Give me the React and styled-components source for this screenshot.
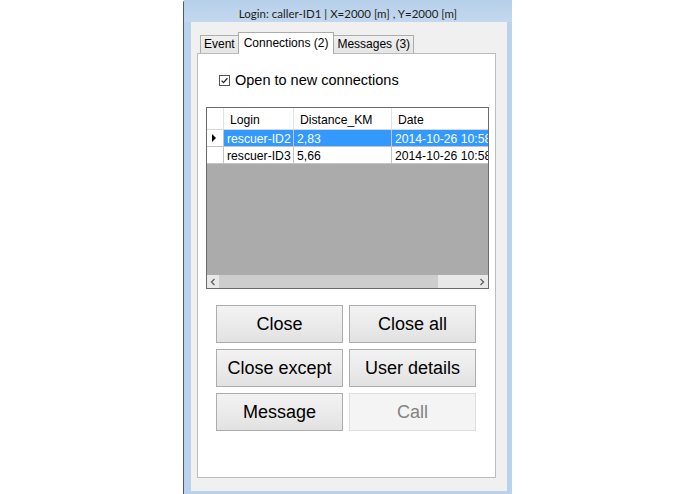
import React from "react";
import styled, { createGlobalStyle, css } from "styled-components";

const Global = createGlobalStyle`
  html, body { margin: 0; padding: 0; background: #ffffff; }
  * { box-sizing: border-box; }
`;

const Page = styled.div`
  width: 695px;
  height: 494px;
  display: flex;
  justify-content: center;
  overflow: hidden;
`;

const Window = styled.div`
  width: 329px;
  height: 494px;
  display: flex;
  flex-direction: column;
  border-left: 1px solid #4f5b68;
  border-top-left-radius: 3px;
  background: #bad2ec;
  padding: 0 5px 3px 7px;
`;

const TitleBar = styled.div`
  height: 22px;
  display: flex;
  align-items: center;
  justify-content: center;
  padding-top: 4px;
  font-family: Lato, "Noto Sans", sans-serif;
  font-size: 11.5px;
  color: #1e1e1e;
  background: linear-gradient(#b6cfe9, #c3d8ee);
  margin: 0 -5px 0 -7px;
`;

const Client = styled.div`
  flex: 1;
  display: flex;
  flex-direction: column;
  background: #f0f0f0;
  padding: 10px 11px 13px 6px;
`;

const TabStrip = styled.div`
  height: 21px;
  display: flex;
  align-items: flex-end;
  padding-left: 3px;
  position: relative;
  z-index: 1;
`;

const Tab = styled.div`
  font-family: "Liberation Sans", Arial, sans-serif;
  font-size: 12px;
  color: #000;
  display: flex;
  align-items: center;
  justify-content: center;
  border: 1px solid #acacac;
  border-bottom: none;
  ${(p) =>
    p.$active
      ? css`
          height: 22px;
          margin: 0 -1px -1px -1px;
          padding: 0 5px 2px;
          background: #ffffff;
          position: relative;
          z-index: 2;
        `
      : css`
          height: 18px;
          padding: 0 3px 1px;
          background: linear-gradient(#f0f0f0, #e5e5e5);
        `}
`;

const TabPanel = styled.div`
  flex: 1;
  background: #ffffff;
  border: 1px solid #bcbcbc;
  display: flex;
  flex-direction: column;
`;

const CheckRow = styled.label`
  display: flex;
  align-items: center;
  gap: 5px;
  height: 18px;
  margin: 17px 0 0 21px;
  font-family: "Liberation Sans", Arial, sans-serif;
  font-size: 14.5px;
  color: #000;
`;

const Grid = styled.div`
  width: 283px;
  height: 182px;
  margin: 18px 0 0 8px;
  border: 1px solid #6b6b6b;
  background: #ababab;
  display: flex;
  flex-direction: column;
  overflow: hidden;
`;

const Table = styled.div`
  display: grid;
  grid-template-columns: 17px 70px 98px 120px;
  grid-template-rows: 22px 17px 17px;
  font-family: "Liberation Sans", Arial, sans-serif;
  font-size: 12.2px;
  color: #000;
`;

const HeadCell = styled.div`
  background: #ffffff;
  border-right: 1px solid #e2e2e2;
  border-bottom: 1px solid #d8d8d8;
  display: flex;
  align-items: center;
  padding: 2px 0 0 6px;
  white-space: nowrap;
`;

const RowHead = styled.div`
  background: #ffffff;
  border-right: 1px solid #c4c4c4;
  border-bottom: 1px solid #c4c4c4;
  display: flex;
  align-items: center;
  padding-left: 5px;
`;

const Arrow = styled.span`
  width: 0;
  height: 0;
  border-top: 4px solid transparent;
  border-bottom: 4px solid transparent;
  border-left: 4px solid #000;
`;

const Cell = styled.div`
  border-right: 1px solid #c4c4c4;
  border-bottom: 1px solid #c4c4c4;
  display: flex;
  align-items: center;
  padding: 1px 0 0 3px;
  white-space: nowrap;
  overflow: hidden;
  background: ${(p) => (p.$selected ? "#3399ff" : "#ffffff")};
  color: ${(p) => (p.$selected ? "#ffffff" : "#000000")};
`;

const Empty = styled.div`
  flex: 1;
  background: #ababab;
`;

const HScroll = styled.div`
  height: 13px;
  background: #e8e8e8;
  display: flex;
  align-items: center;
`;

const ScrollArrow = styled.div`
  width: 12px;
  height: 13px;
  display: flex;
  align-items: center;
  justify-content: center;
`;

const Thumb = styled.div`
  width: 219px;
  height: 13px;
  background: #cdcdcd;
`;

const Track = styled.div`
  flex: 1;
`;

const Buttons = styled.div`
  display: grid;
  grid-template-columns: 127px 127px;
  grid-auto-rows: 38px;
  column-gap: 6px;
  row-gap: 6px;
  margin: 16px 0 0 18px;
`;

const Button = styled.button`
  font-family: "Liberation Sans", Arial, sans-serif;
  font-size: 18px;
  padding: 0;
  border: 1px solid ${(p) => (p.disabled ? "#dedede" : "#adadad")};
  background: ${(p) =>
    p.disabled ? "#f4f4f4" : "linear-gradient(#f2f2f2, #ebebeb 50%, #e2e2e2)"};
  color: ${(p) => (p.disabled ? "#838383" : "#000000")};
`;

const ChevL = () => (
  <svg width="6" height="8" viewBox="0 0 6 8">
    <path d="M4.5 1 L1.5 4 L4.5 7" fill="none" stroke="#606060" strokeWidth="1.3" />
  </svg>
);
const ChevR = () => (
  <svg width="6" height="8" viewBox="0 0 6 8">
    <path d="M1.5 1 L4.5 4 L1.5 7" fill="none" stroke="#606060" strokeWidth="1.3" />
  </svg>
);

const CheckBox = () => (
  <svg width="11" height="11" viewBox="0 0 11 11">
    <rect x="0.5" y="0.5" width="10" height="10" fill="#fff" stroke="#555" />
    <path d="M2.6 5.6 L4.5 7.6 L8.4 3.2" fill="none" stroke="#222" strokeWidth="1.3" />
  </svg>
);

const rows = [
  { login: "rescuer-ID2", dist: "2,83", date: "2014-10-26 10:58", selected: true },
  { login: "rescuer-ID3", dist: "5,66", date: "2014-10-26 10:58", selected: false },
];

export default function App() {
  return (
    <>
      <Global />
      <Page>
        <Window>
          <TitleBar>Login: caller-ID1 | X=2000 [m] , Y=2000 [m]</TitleBar>
          <Client>
            <TabStrip>
              <Tab>Event</Tab>
              <Tab $active>Connections (2)</Tab>
              <Tab>Messages (3)</Tab>
            </TabStrip>
            <TabPanel>
              <CheckRow>
                <CheckBox />
                Open to new connections
              </CheckRow>
              <Grid>
                <Table>
                  <HeadCell />
                  <HeadCell>Login</HeadCell>
                  <HeadCell>Distance_KM</HeadCell>
                  <HeadCell>Date</HeadCell>
                  {rows.map((r) => (
                    <React.Fragment key={r.login}>
                      <RowHead>{r.selected && <Arrow />}</RowHead>
                      <Cell $selected={r.selected}>{r.login}</Cell>
                      <Cell $selected={r.selected}>{r.dist}</Cell>
                      <Cell $selected={r.selected}>{r.date}</Cell>
                    </React.Fragment>
                  ))}
                </Table>
                <Empty />
                <HScroll>
                  <ScrollArrow>
                    <ChevL />
                  </ScrollArrow>
                  <Thumb />
                  <Track />
                  <ScrollArrow>
                    <ChevR />
                  </ScrollArrow>
                </HScroll>
              </Grid>
              <Buttons>
                <Button>Close</Button>
                <Button>Close all</Button>
                <Button>Close except</Button>
                <Button>User details</Button>
                <Button>Message</Button>
                <Button disabled>Call</Button>
              </Buttons>
            </TabPanel>
          </Client>
        </Window>
      </Page>
    </>
  );
}
